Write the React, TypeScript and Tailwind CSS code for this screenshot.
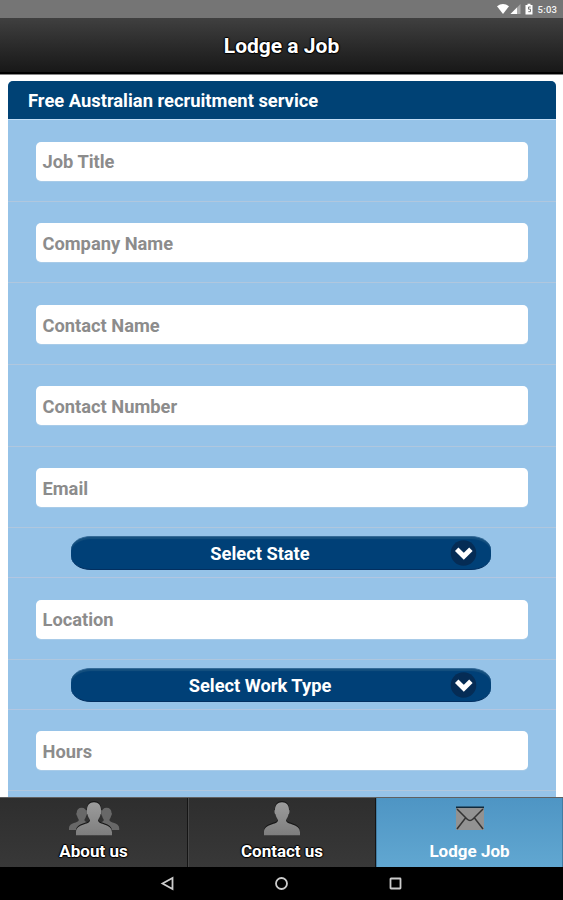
import React from "react";

const OUTLINE =
  "[text-shadow:0_-1px_1px_#000,1px_0_1px_#000,-1px_0_1px_#000,0_1px_1px_#000]";

function StatusBar() {
  return (
    <div className="flex h-[18px] shrink-0 items-center justify-end bg-[#757575] pr-[5px]">
      <svg width="62" height="18" viewBox="0 0 62 18" className="block">
        <path d="M1 6.300Q7 1.800 13 6.300L7 14Z" fill="#fff" />
        <path d="M14.500 14L24.500 4V14Z" fill="#a9a9a9" />
        <path d="M14.500 14L21 7.500V14Z" fill="#fff" />
        <path d="M29.500 5h2v-1.200h3V5h2v9.500h-7z" fill="#fff" />
        <path d="M34.700 7h-2.200v2.200h2v2.500h-2.200" fill="none" stroke="#757575" strokeWidth="1" />
        <text x="41.500" y="13" fill="#f4f4f4" fontSize="9.500" fontWeight="500" fontFamily="Roboto, sans-serif" textLength="19.500">
          5:03
        </text>
      </svg>
    </div>
  );
}

function InputRow({ label }: { label: string }) {
  return (
    <div className="h-[81.600px] shrink-0 border-b border-[#b0c7de] pt-[21.500px] pr-7 pl-[27.500px]">
      <div className="flex h-[39px] items-center rounded-[5px] bg-white pt-0.5 pl-[7px] text-[18.300px] font-bold text-[#8c8c8c] shadow-[0_1px_0_#a8cbe8]">
        {label}
      </div>
    </div>
  );
}

function SelectRow({ label }: { label: string }) {
  return (
    <div className="h-[50px] shrink-0 border-b border-[#b2c6e1] pt-2 pr-[65px] pl-[63px]">
      <div className="flex h-[34px] items-center rounded-[20px/14px] border-t border-b border-t-[#356b98] border-b-[#032f60] bg-[#004077] shadow-[inset_0_2px_1px_#15507f]">
        <div className="w-[378px] shrink-0 pt-0.5 text-center text-[18.300px] font-bold text-white">
          {label}
        </div>
        <svg width="28" height="28" viewBox="0 0 28 28" className="block shrink-0">
          <circle cx="14.500" cy="14" r="12.800" fill="#052c55" />
          <path d="M7.700 10.300l7.100 7 7.100-7" fill="none" stroke="#fff" strokeWidth="4.900" />
        </svg>
      </div>
    </div>
  );
}

const PERSON =
  "M18 1C22.500 1 25 4 25 8.500C26 9 25.500 12.500 24.500 13C24 16 22.500 17.500 22 19C22 24 36 22 36 31V34H0V31C0 22 14 24 14 19C13.500 17.500 12 16 11.500 13C10.500 12.500 10 9 11 8.500C11 4 13.500 1 18 1Z";

function PeopleIcon({ group = false }: { group?: boolean }) {
  const id = group ? "group-metal" : "person-metal";
  return (
    <svg width="52" height="38" viewBox="0 0 52 38" className="block">
      <defs>
        <linearGradient id={id} x1="0" y1="0" x2="0" y2="1">
          <stop offset="0" stopColor="#9c9c9c" />
          <stop offset="1" stopColor="#7e7e7e" />
        </linearGradient>
      </defs>
      {group && (
        <g fill="#686868">
          <path transform="translate(1 8) scale(.7 .68)" d={PERSON} />
          <path transform="translate(26 8) scale(.7 .68)" d={PERSON} />
        </g>
      )}
      <path transform="translate(8 1)" d={PERSON} fill="#171717" />
      <path transform="translate(8 2.300)" d={PERSON} fill={`url(#${id})`} />
    </svg>
  );
}

function MailIcon() {
  return (
    <svg width="30" height="26" viewBox="0 0 30 26" className="block">
      <rect x="1" y="1.500" width="28" height="3" fill="#102a3d" />
      <rect x="1" y="3" width="28" height="22" rx="1" fill="#929292" />
      <path d="M2 4L12 14Q15 17 18 14L28 4M2 24L10.500 13M28 24L19.500 13" fill="none" stroke="#343434" strokeWidth="1.500" />
    </svg>
  );
}

export default function App() {
  return (
    <div className="flex h-[900px] w-[563px] flex-col overflow-hidden bg-white font-[Roboto,'Noto_Sans',sans-serif]">
      <StatusBar />
      <header className="flex h-14 shrink-0 items-center justify-center border-b-2 border-black bg-linear-to-b from-[#404040] to-[#181818] pt-1 shadow-[0_1px_0_#858585]">
        <h1 className={`text-[21px] font-bold text-white ${OUTLINE}`}>Lodge a Job</h1>
      </header>

      <main className="flex min-h-0 flex-1 flex-col overflow-hidden pt-[7px] pr-[7px] pl-2">
        <section className="flex shrink-0 flex-col rounded-t-[5px] bg-[#96c3e8]">
          <h2 className="flex h-[39.200px] shrink-0 items-center rounded-t-[5px] border-b border-[#c0dcf5] bg-[#004275] bg-clip-padding pt-0.5 pl-5 text-[18.350px] font-bold text-white">
            Free Australian recruitment service
          </h2>
          <InputRow label="Job Title" />
          <InputRow label="Company Name" />
          <InputRow label="Contact Name" />
          <InputRow label="Contact Number" />
          <InputRow label="Email" />
          <SelectRow label="Select State" />
          <InputRow label="Location" />
          <SelectRow label="Select Work Type" />
          <InputRow label="Hours" />
          <div className="h-10 shrink-0" />
        </section>
      </main>

      <nav className={`flex h-[70px] shrink-0 border-t border-[#606060] bg-linear-to-b from-[#2e2e2e] to-[#383838] text-[17px] font-bold text-white ${OUTLINE}`}>
        <div className="flex w-[188px] flex-col items-center border-r border-[#151515]">
          <div className="flex h-10 items-center"><PeopleIcon group /></div>
          <span className="leading-[26px]">About us</span>
        </div>
        <div className="flex w-[188px] flex-col items-center border-r border-l border-[#151515] border-l-[#484848]">
          <div className="flex h-10 items-center"><PeopleIcon /></div>
          <span className="leading-[26px]">Contact us</span>
        </div>
        <div className="flex w-[187px] flex-col items-center border-r border-l border-[#417ca3] bg-linear-to-b from-[#4e95c4] to-[#61a7d1] [text-shadow:none]">
          <div className="flex h-10 items-center"><MailIcon /></div>
          <span className="leading-[26px]">Lodge Job</span>
        </div>
      </nav>

      <footer className="flex h-[33px] shrink-0 items-center justify-center gap-[99px] bg-black">
        <svg width="15" height="15" viewBox="0 0 15 15" className="block">
          <path d="M2.500 7.500L12.500 2V13Z" fill="none" stroke="#ccc" strokeWidth="1.800" />
        </svg>
        <svg width="15" height="15" viewBox="0 0 15 15" className="block">
          <circle cx="7.500" cy="7.500" r="5.500" fill="none" stroke="#ccc" strokeWidth="1.800" />
        </svg>
        <svg width="15" height="15" viewBox="0 0 15 15" className="block">
          <rect x="2.500" y="2.500" width="10" height="10" rx=".5" fill="none" stroke="#ccc" strokeWidth="1.800" />
        </svg>
      </footer>
    </div>
  );
}
